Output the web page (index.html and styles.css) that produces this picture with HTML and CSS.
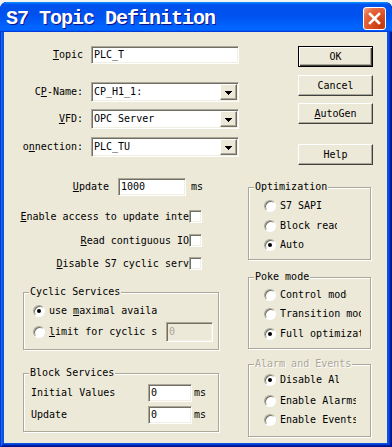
FILE: index.html
```html
<!DOCTYPE html>
<html>
<head>
<meta charset="utf-8">
<link rel="stylesheet" href="styles.css">
</head>
<body>
<div class="window">
  <div class="titlebar">
    <span class="title">S7 Topic Definition</span>
    <span class="close"><svg width="21" height="21" viewBox="0 0 21 21"><path d="M6 6 L15 15 M15 6 L6 15" stroke="#fff" stroke-width="2.6" stroke-linecap="square"/></svg></span>
  </div>
  <div class="client">
    <div class="left">
      <div class="row f-topic"><span class="lbl lbl-top"><u>T</u>opic</span><div class="edit">PLC_T</div></div>
      <div class="row f-cp"><span class="lbl lbl-top">C<u>P</u>-Name:</span><div class="combo"><span class="ctext">CP_H1_1:</span><span class="drop"><svg width="7" height="4" viewBox="0 0 7 4"><path d="M0 0H7V1H6V2H5V3H4V4H3V3H2V2H1V1H0Z"/></svg></span></div></div>
      <div class="row f-vfd"><span class="lbl lbl-top"><u>V</u>FD:</span><div class="combo"><span class="ctext">OPC Server</span><span class="drop"><svg width="7" height="4" viewBox="0 0 7 4"><path d="M0 0H7V1H6V2H5V3H4V4H3V3H2V2H1V1H0Z"/></svg></span></div></div>
      <div class="row f-conn"><span class="lbl lbl-top">o<u>n</u>nection:</span><div class="combo"><span class="ctext">PLC_TU</span><span class="drop"><svg width="7" height="4" viewBox="0 0 7 4"><path d="M0 0H7V1H6V2H5V3H4V4H3V3H2V2H1V1H0Z"/></svg></span></div></div>
      <div class="row f-update"><span class="lbl lbl-upd"><u>U</u>pdate</span><div class="edit e-upd">1000</div><span class="ms ms-upd">ms</span></div>
      <div class="row chk-row c1"><span class="chk-lbl"><u>E</u>nable access to update inte</span><span class="chk"></span></div>
      <div class="row chk-row c2"><span class="chk-lbl"><u>R</u>ead contiguous IO</span><span class="chk"></span></div>
      <div class="row chk-row c3"><span class="chk-lbl"><u>D</u>isable S7 cyclic serv</span><span class="chk"></span></div>
      <div class="group g-cyclic">
        <span class="legend">Cyclic Services</span>
        <div class="rad-row cy1"><span class="radio on"></span><span class="rad-lbl w108">use <u>m</u>aximal availa</span></div>
        <div class="rad-row cy2"><span class="radio"></span><span class="rad-lbl w108"><u>l</u>imit for cyclic s</span><div class="edit e-dis">0</div></div>
      </div>
      <div class="group g-block">
        <span class="legend">Block Services</span>
        <div class="row b1"><span class="lbl lbl-blk">Initial Values</span><div class="edit e-blk">0</div><span class="ms ms-blk">ms</span></div>
        <div class="row b2"><span class="lbl lbl-blk">Update</span><div class="edit e-blk">0</div><span class="ms ms-blk">ms</span></div>
      </div>
    </div>
    <div class="right">
      <div class="btn def b-ok">OK</div>
      <div class="btn b-cancel">Cancel</div>
      <div class="btn b-auto"><u>A</u>utoGen</div>
      <div class="btn b-help">Help</div>
      <div class="group g-opt">
        <span class="legend">Optimization</span>
        <div class="rad-row o1"><span class="radio"></span><span class="rad-lbl">S7 SAPI</span></div>
        <div class="rad-row o2"><span class="radio"></span><span class="rad-lbl w57">Block read</span></div>
        <div class="rad-row o3"><span class="radio on"></span><span class="rad-lbl">Auto</span></div>
      </div>
      <div class="group g-poke">
        <span class="legend">Poke mode</span>
        <div class="rad-row p1"><span class="radio"></span><span class="rad-lbl w67">Control mode</span></div>
        <div class="rad-row p2"><span class="radio"></span><span class="rad-lbl w81">Transition mode</span></div>
        <div class="rad-row p3"><span class="radio on"></span><span class="rad-lbl w81">Full optimization</span></div>
      </div>
      <div class="group g-alarm">
        <span class="legend disabled">Alarm and Events</span>
        <div class="rad-row a1"><span class="radio on"></span><span class="rad-lbl w59">Disable Alarms</span></div>
        <div class="rad-row a2"><span class="radio"></span><span class="rad-lbl w76">Enable Alarms</span></div>
        <div class="rad-row a3"><span class="radio"></span><span class="rad-lbl w76">Enable Events</span></div>
      </div>
    </div>
  </div>
</div>
</body>
</html>
```
FILE: styles.css
```css
* { box-sizing: border-box; }
html, body { margin: 0; padding: 0; }
body {
  width: 392px; height: 447px; overflow: hidden;
  background: #f3f3f3;
  font-family: "DejaVu Sans Mono", monospace;
  font-size: 10px; line-height: 12px; color: #000;
}
u { text-decoration: underline; text-underline-offset: 1px; text-decoration-thickness: 1px; }

.window {
  margin-top: 2px; width: 392px; height: 445px;
  display: flex; flex-direction: column;
  background: #0855dd;
  border-radius: 7px 7px 0 0;
  box-shadow: inset 1px 0 #0831d9, inset -1px -1px #00138c, inset 2px 0 #166aee, inset -2px -2px #001ea0, inset -3px -3px #003bda;
  overflow: hidden;
}
.titlebar {
  height: 30px; flex: none;
  display: flex; align-items: flex-start;
  border-radius: 7px 7px 0 0;
  background: linear-gradient(180deg, #0997ff, #0053ee 8%, #0050ee 40%, #0066ff 88%, #0066ff 93%, #005bff 95%, #003dd7 96%, #003dd7);
}
.title {
  margin: 8px 0 0 6px;
  font: bold 20px/18px "Liberation Mono", monospace;
  letter-spacing: -1px;
  color: #fff;
  text-shadow: 1px 1px #0f1089;
  white-space: nowrap;
}
.close {
  margin: 5px 6px 0 auto;
  width: 23px; height: 23px;
  border: 1px solid #fff; border-radius: 3px;
  background: radial-gradient(circle at 85% 85%, #c3380f 0%, #dd4f25 45%, #e66c45 75%, #f4a98c 100%);
  display: flex; align-items: center; justify-content: center;
}
.close svg { display: block; }

.client {
  flex: 1;
  margin: 0 5px 4px 4px;
  background: #ece9d8;
  display: flex;
}
.left { width: 244px; flex: none; display: flex; flex-direction: column; align-items: flex-start; }
.right { flex: 1; display: flex; flex-direction: column; align-items: flex-start; }

.row { display: flex; align-items: center; flex: none; }
.lbl { text-align: right; white-space: nowrap; flex: none; }

.f-topic { margin-top: 14px; height: 18px; }
.f-cp { margin-top: 18px; height: 20px; }
.f-vfd { margin-top: 7px; height: 20px; }
.f-conn { margin-top: 8px; height: 20px; }
.lbl-top { width: 79px; }
.lbl-top + .edit, .lbl-top + .combo { margin-left: 8px; width: 148px; }

.edit {
  height: 18px; flex: none;
  background: #fff;
  border: 1px solid; border-color: #aca899 #fff #fff #aca899;
  box-shadow: inset 1px 1px #716f64, inset -1px -1px #f1efe2;
  padding-left: 2px;
  line-height: 16px;
  white-space: nowrap; overflow: hidden;
}
.combo {
  height: 20px; flex: none;
  background: #fff;
  border: 1px solid; border-color: #aca899 #fff #fff #aca899;
  box-shadow: inset 1px 1px #716f64, inset -1px -1px #f1efe2;
  display: flex; align-items: center;
}
.ctext { padding-left: 2px; white-space: nowrap; }
.drop {
  margin-left: auto; margin-right: 1px;
  width: 17px; height: 16px;
  background: #ece9d8;
  border: 1px solid; border-color: #fff #716f64 #716f64 #fff;
  box-shadow: inset -1px -1px #aca899;
  display: flex; align-items: center; justify-content: center;
}
.drop svg { display: block; margin-top: 1px; }

.f-update { margin-top: 21px; height: 18px; }
.lbl-upd { width: 105px; }
.e-upd { margin-left: 9px; width: 68px; }
.ms-upd { margin-left: 5px; }

.chk-row { height: 13px; margin-left: 16px; }
.c1 { margin-top: 14px; }
.c2 { margin-top: 11px; }
.c3 { margin-top: 10px; }
.chk-lbl { width: 169px; text-align: right; white-space: nowrap; overflow: hidden; }
.chk {
  width: 13px; height: 13px; flex: none;
  background: #fff;
  border: 1px solid; border-color: #aca899 #fff #fff #aca899;
  box-shadow: inset 1px 1px #716f64, inset -1px -1px #f1efe2;
}

.group {
  flex: none;
  border: 1px solid #aca899;
  box-shadow: inset 1px 1px #fff, 1px 1px #fff;
  display: flex; flex-direction: column; align-items: flex-start;
}
.legend {
  height: 12px; line-height: 12px;
  margin: -7px 0 0 5px; padding: 0 1px;
  background: #ece9d8;
  white-space: nowrap;
}
.legend.disabled { color: #aca899; text-shadow: 1px 1px #fff; }

.rad-row { display: flex; align-items: center; height: 12px; flex: none; }
.radio {
  width: 12px; height: 12px; flex: none;
  border-radius: 50%;
  background: #fff;
  border: 1px solid; border-color: #aca899 #fff #fff #aca899;
  box-shadow: inset 1px 1px #716f64;
  display: flex; align-items: center; justify-content: center;
}
.radio.on::after { content: ""; width: 4px; height: 4px; border-radius: 50%; background: #000; }
.rad-lbl { margin-left: 4px; white-space: nowrap; overflow: hidden; }
.w108 { width: 109px; }
.w57 { width: 57px; }
.w59 { width: 59px; }
.w67 { width: 67px; }
.w76 { width: 76px; }
.w81 { width: 81px; }

.g-cyclic { margin: 22px 0 0 19px; width: 196px; height: 58px; }
.g-cyclic .rad-row { margin-left: 9px; }
.cy1 { margin-top: 7px; }
.cy2 { margin-top: 5px; height: 20px; }
.e-dis { margin-left: 8px; width: 47px; height: 20px; line-height: 18px; background: #ece9d8; color: #aca899; }

.g-block { margin: 23px 0 0 19px; width: 196px; height: 59px; }
.b1 { margin-top: 5px; height: 18px; }
.b2 { margin-top: 4px; height: 18px; }
.lbl-blk { width: 117px; margin-left: 7px; text-align: left; }
.e-blk { width: 44px; }
.ms-blk { margin-left: 2px; }

.btn {
  width: 75px; height: 21px; flex: none;
  margin-left: 50px;
  display: flex; align-items: center; justify-content: center;
  background: #ece9d8;
  border: 1px solid; border-color: #fff #404040 #404040 #fff;
  box-shadow: inset -1px -1px #aca899;
}
.btn.def { border-color: #000; box-shadow: inset 1px 1px #fff, inset -1px -1px #404040, inset -2px -2px #aca899; }
.b-ok { margin-top: 14px; }
.b-cancel { margin-top: 8px; }
.b-auto { margin-top: 7px; }
.b-help { margin-top: 20px; }

.g-opt { margin-top: 22px; width: 123px; height: 73px; }
.g-poke { margin-top: 17px; width: 123px; height: 72px; }
.g-alarm { margin-top: 15px; width: 123px; height: 73px; }
.right .rad-row { margin-left: 15px; }
.o1 { margin-top: 7px; }
.o2 { margin-top: 8px; }
.o3 { margin-top: 7px; }
.p1 { margin-top: 6px; }
.p2 { margin-top: 7px; }
.p3 { margin-top: 8px; }
.a1 { margin-top: 4px; }
.a2 { margin-top: 9px; }
.a3 { margin-top: 7px; }
```
